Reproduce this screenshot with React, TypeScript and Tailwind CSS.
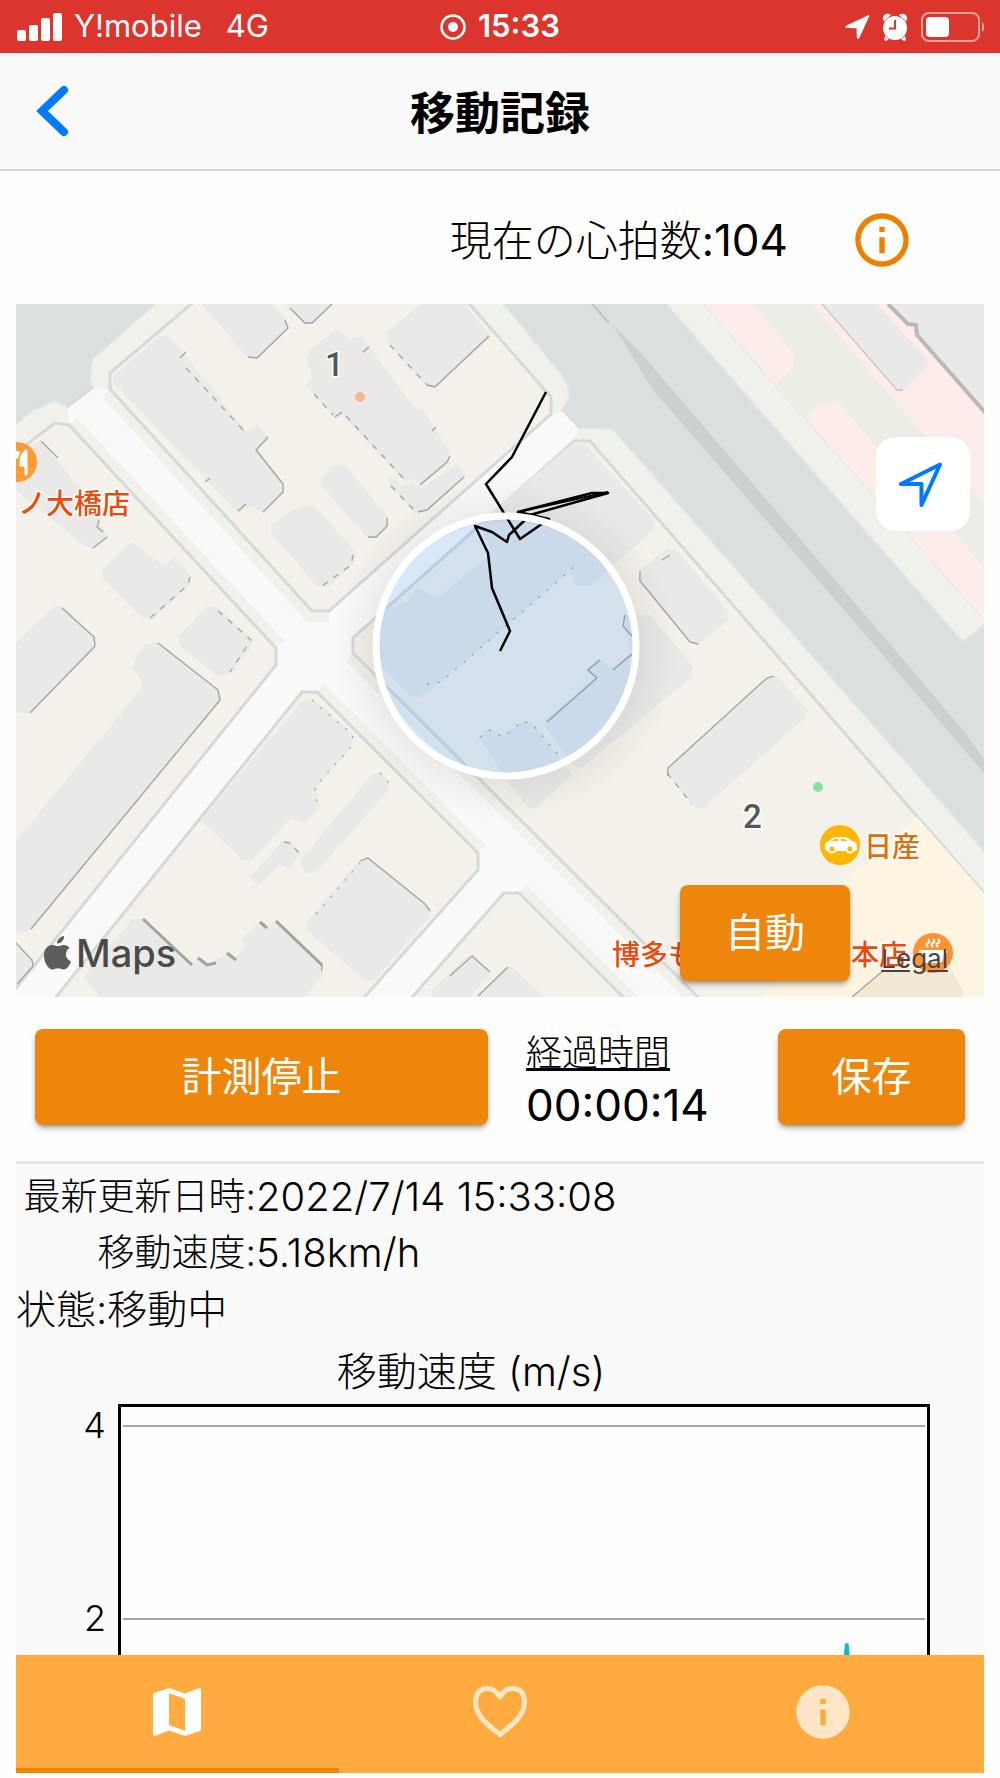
import { useState } from "react";
import { MdInfo, MdInfoOutline, MdMap } from "react-icons/md";

const fontStack = "font-['Inter','Noto_Sans_CJK_JP',sans-serif]";

const blocks = [
  "M196 300L110 373V389L312 611H329L551 414V397L466 300Z",
  "M574 441H590L990 900V1005H706L353 653V638Z",
  "M10 457L55 423L69 425L276 648V665L0 1008V457Z",
  "M302 692H317L478 853V870L360 1002H52Z",
  "M504 893H519L630 1004H406Z",
];

const buildings = [
  "M160 337H167L182 353L247 434L257 426L268 437L256 450L283 483V493L263 512L250 505L238 512L115 383V376Z",
  "M200 300L248 357H257L288 327L285 320L266 300Z",
  "M283 300L305 323H312L336 300Z",
  "M337 331L350 340L360 337L368 347L415 410H422L450 453L448 462L420 485L413 478L405 480L343 415L335 417L308 385L313 378L308 360L310 350Z",
  "M427 300L388 333L390 345L427 385H435L490 337L460 300Z",
  "M334 466H344L388 518L387 527L377 537H368L322 485V479Z",
  "M304 507H314L355 553L353 563L328 586H318L272 532V525L292 512Z",
  "M390 477L403 487L412 483L420 490L457 465L465 475L427 510L415 512L390 485Z",
  "M40 442L100 513L99 524L107 537L93 548L85 545L10 484V460Z",
  "M132 543L165 568L175 558L190 577L188 585L153 618L143 617L103 577V571Z",
  "M55 607H62L95 638V648L28 713L10 710V650Z",
  "M207 607L217 608L251 640L250 648L230 672L218 675L182 647L180 637Z",
  "M147 645L158 643L218 690L220 700L30 928L20 933L10 930V850L143 688L142 680L133 668L138 655Z",
  "M302 703L312 700L353 735L350 748L315 787L318 807L305 821L290 818L250 860L242 858L202 820Z",
  "M373 775L380 773L388 782L387 790L317 870L307 872L302 867V860Z",
  "M283 842H290L299 853L288 868L280 863L258 884L251 877Z",
  "M360 861L368 858L430 910L428 917L373 980L367 981L308 930V922Z",
  "M133 920L143 919L192 965L200 958L210 965L228 953L235 960L247 945L242 940L260 923L267 928L276 922L322 965V975L300 1000H104L85 977Z",
  "M10 939L33 962L10 988Z",
  "M433 990L466 958L473 956L490 973L465 1000H433Z",
  "M477 999L506 968H512L545 999Z",
  "M572 445H584L653 520L652 530L590 585L577 585L570 570L440 682L418 697L408 693L378 660V613L408 603L417 588L437 600L493 553L480 523Z",
  "M667 550L677 552L728 613L727 620L698 644L690 642L640 580V572Z",
  "M623 617L650 616L692 667L690 677L582 766L574 765L547 727L545 722L595 678L588 670L600 660L612 670L632 653Z",
  "M480 737L490 730L503 737L523 721L533 725L571 775L535 807H529L510 783Z",
  "M767 678L775 676L807 710L805 717L703 807H696L667 773L668 768Z",
];

const outlines = [
  "M263 512L283 492V484L256 450L268 437M180 358L186 352M205 482L210 478M238 511L246 504",
  "M248 357L257 358L288 328L285 320M290 308L305 323H312L332 304",
  "M420 485L447 462L450 456M335 417L342 412M363 352L369 347M432 431L436 427",
  "M427 385L435 387L489 336M418 512L427 510L464 477",
  "M368 537H376L387 526V518M93 548L107 537M99 520L97 527L103 532M41 441L58 458",
  "M62 608L94 637L95 646L30 713",
  "M158 643L218 690L220 700L31 929",
  "M360 861L368 858L425 904L430 911",
  "M16 943L32 960L33 966L17 984M450 976L472 956L490 972M478 996L508 967",
  "M670 555L662 560M640 571V581L690 642L698 644",
  "M774 676L767 678L668 768V776M597 678L547 722M600 660L588 670L597 678M613 670L632 654M625 615L623 626L632 636",
  "M852 997L884 970",
];

const dashes = [
  "M186 368L247 434M390 345L427 385M314 394L333 415M346 416L405 480M391 486L416 512",
  "M353 555L351 565L322 586M190 577L188 585L150 618M218 611L251 640L230 672",
  "M284 842L290 843L299 853M667 773L692 804M322 965L321 976",
];

const dots = [
  "M312 700L353 735L350 748L315 787L318 810M380 773L388 782L387 790M316 914L360 863",
  "M427 684L441 682L575 566M480 737L490 730L503 737L523 721L533 725L560 757",
];

const route =
  "M546 392L512 457L486 484L520 539L549 519L518 512L592 493L608 493L530 515L523 522L509 535L507 542L492 532L475 526L488 553L492 588L510 631L500 651";

const tabs = [
  { key: "map", label: "マップ" },
  { key: "heart", label: "心拍数" },
  { key: "info", label: "情報" },
];

function StatusBar() {
  return (
    <div className="grid h-[53px] shrink-0 grid-cols-3 items-center bg-[#dc352e] px-4 text-[31px] text-white">
      <div className="flex items-center">
        <svg viewBox="0 0 46 28" className="h-7 w-[46px]" fill="currentColor">
          <rect x="1" y="17" width="9" height="11" rx="2" />
          <rect x="13" y="12" width="9" height="16" rx="2" />
          <rect x="25" y="5" width="9" height="23" rx="2" />
          <rect x="37" y="0" width="9" height="28" rx="2" />
        </svg>
        <span className="ml-3">Y!mobile</span>
        <span className="ml-6">4G</span>
      </div>
      <div className="flex items-center justify-center gap-3 font-semibold">
        <svg viewBox="0 0 26 26" className="size-[26px]">
          <circle cx="13" cy="13" r="11.500" fill="none" stroke="currentColor" strokeWidth="2.500" />
          <circle cx="13" cy="13" r="5" fill="currentColor" />
        </svg>
        15:33
      </div>
      <div className="flex items-center justify-end gap-3">
        <svg viewBox="0 0 26 26" className="size-[26px]" fill="currentColor">
          <path d="M24.3 1.2c.7-.3 1.2.3.9 1L15.4 23.8c-.6 1.4-2.5 1.2-2.6-.3l-.2-9.3-9.7-.2c-1.700 0-1.900-1.900-.5-2.600z" />
        </svg>
        <svg viewBox="0 0 26 28" className="h-7 w-[26px]" fill="currentColor">
          <circle cx="13" cy="15" r="12" />
          <path d="M1 7C0 2 5-1 9 2L2 8ZM25 7c1-5-4-8-8-5l7 6ZM3 23l4 3-3 2-2-1ZM23 23l-4 3 3 2 2-1Z" />
          <path d="M13 7v8.500H7" fill="none" stroke="#dc352e" strokeWidth="2" />
        </svg>
        <svg viewBox="0 0 64 32" className="h-8 w-16">
          <rect x="2" y="2" width="57" height="28" rx="7" fill="none" stroke="#f0a09c" strokeWidth="2" />
          <rect x="6" y="6" width="23" height="20" rx="4" fill="white" />
          <path d="M62 11c3 2 3 8 0 10Z" fill="#f0a09c" />
        </svg>
      </div>
    </div>
  );
}

function Header() {
  return (
    <header className="grid h-[118px] shrink-0 grid-cols-[100px_1fr_100px] items-center border-b-2 border-[#d5d7d8] bg-[#f9f9f9]">
      <button type="button" aria-label="戻る" className="flex h-full items-center pl-9 text-[#007aff]">
        <svg viewBox="0 0 34 52" className="h-[52px] w-[34px]">
          <path d="M28 5L6 26l22 21" fill="none" stroke="currentColor" strokeWidth="8" strokeLinecap="round" />
        </svg>
      </button>
      <h1 className="pt-1 text-center text-[45px] leading-none font-bold">移動記録</h1>
    </header>
  );
}

function MapDrawing() {
  return (
    <svg
      viewBox="16 304 968 693"
      className="block h-full w-full"
      preserveAspectRatio="xMidYMid slice"
    >
      <defs>
        <radialGradient id="areaShadow">
          <stop offset="0.74" stopColor="#000" stopOpacity="0" />
          <stop offset="0.75" stopColor="#000" stopOpacity="0.06" />
          <stop offset="1" stopColor="#000" stopOpacity="0" />
        </radialGradient>
      </defs>
      <rect x="16" y="304" width="968" height="693" fill="#f9f9f9" />
      {/* river banks */}
      <g fill="#f0f1eb" stroke="#f0f1eb">
        <path d="M10 300H196L110 373V389L93 387L67 407L69 425L55 423L10 457Z" />
        <path d="M466 300L551 397V414L565 410L580 428L574 441H590L990 900V626L703 300Z" />
      </g>
      <g fill="none" stroke="#f0f1eb" strokeWidth="22">
        <path d="M110 389L312 611H329M69 425L276 648M353 653L706 1005M317 692L478 853M519 893L630 1004" />
      </g>
      {/* water */}
      <g fill="#dae0e0" stroke="#e4e8e4" strokeWidth="2">
        <path d="M10 300H160L92 360L90 380L93 387L67 407L55 401L33 410L10 430Z" />
        <path d="M500 300L555 367Q578 390 563 408L580 428L612 429L622 440L990 858V620L963 642L663 300Z" />
      </g>
      <path d="M613 325L640 352L895 650L967 735L990 768V780L870 640L653 390Z" fill="#cbd1d0" />
      <path d="M592 304L609 323" stroke="#bfc5c5" strokeWidth="2" />
      <path d="M93 387L67 407M562 409L580 428" stroke="#dfddd3" strokeWidth="3" />
      {/* east side */}
      <path d="M703 300H990V627L982 618Z" fill="#fcecea" />
      <path
        d="M748 300H809L925 437L990 510V575L952 530L877 447L838 402H822L805 417L777 383L793 368L795 355Z"
        fill="#ecede5"
      />
      <path d="M818 300L897 390H903L928 365V360L873 300Z" fill="#eae9e7" />
      <path d="M822 304L897 390H903" fill="none" stroke="#adacaa" />
      <path d="M884 300L908 324L916 325L917 335L990 418V300Z" fill="#eae9e7" />
      <path d="M888 304L908 324L916 325L917 335L990 418" fill="none" stroke="#bbb9b8" strokeWidth="4" />
      <path d="M963 642L990 619M703 304L982 618" fill="none" stroke="#e4e2d5" />
      <g fill="#f4f1ea" stroke="#d5d9da" strokeWidth="3">
        {blocks.map((d) => (
          <path key={d} d={d} />
        ))}
      </g>
      <path d="M917 817L843 882L850 940L758 997H990V900Z" fill="#fdf4e2" />
      <path d="M852 997L883 970L916 973L950 968L963 990L962 997Z" fill="#f3e8d4" />
      <g fill="#eae9e7" stroke="#eae9e7" strokeWidth="2" strokeLinejoin="round">
        {buildings.map((d) => (
          <path key={d} d={d} />
        ))}
      </g>
      <g fill="none" stroke="#a3a2a1" strokeWidth="1.300">
        {outlines.map((d) => (
          <path key={d} d={d} />
        ))}
        {dashes.map((d) => (
          <path key={d} d={d} strokeDasharray="6 7" />
        ))}
        {dots.map((d) => (
          <path key={d} d={d} strokeDasharray="2 9" />
        ))}
        <path
          d="M143 919L192 965M198 958L207 965L216 963M227 953L236 960M260 922L267 928M276 921L322 965"
          strokeWidth="3"
        />
      </g>
      {/* current area and the walked route */}
      <circle cx="506" cy="649" r="172" fill="url(#areaShadow)" />
      <circle cx="506" cy="646" r="130" fill="#007aff" fillOpacity="0.13" />
      <path d={route} fill="none" stroke="#000" strokeWidth="2.500" strokeLinejoin="round" />
      <path d="M518 512L608 492" stroke="#000" strokeWidth="2" />
      <circle cx="506" cy="646" r="130" fill="none" stroke="#fff" strokeWidth="7" />

      <circle cx="360" cy="397" r="5" fill="#f7b795" />
      <circle cx="818" cy="787" r="5" fill="#86e0a0" />
      <g fontSize="33" fontWeight="500" fill="#53595b" stroke="#fff" strokeWidth="3" paintOrder="stroke" fontFamily="Roboto">
        <text x="325" y="376">1</text>
        <text x="743" y="828">2</text>
      </g>
      <g
        fontSize="28"
        fontWeight="500"
        fill="#ea4a0a"
        stroke="#fff"
        strokeWidth="3"
        strokeLinejoin="round"
        paintOrder="stroke"
      >
        <text x="18" y="514">ノ大橋店</text>
        <text x="612" y="965">博多も</text>
        <text x="851" y="965">本店</text>
        <text x="864" y="857" fill="#d9700c">日産</text>
      </g>
      <g>
        <circle cx="17" cy="462" r="20" fill="#ff9a35" />
        <path d="M26 451v23M26 451q-6 5-5 14h5" fill="#fff" stroke="#fff" strokeWidth="3" strokeLinecap="round" />
        <path d="M16 451v8q3 0 4-8" fill="#fff" />
      </g>
      <g>
        <circle cx="840" cy="845" r="20" fill="#ffb700" />
        <path
          d="M825 845q0-3 4-4q4-4 7-4h8q4 0 8 4q5 1 5 5v3q0 2-3 2h-26q-3 0-3-2Z"
          fill="#fff"
        />
        <path d="M831 841l4-2h3v2ZM841 839h3l4 2h-7Z" fill="#ffb700" />
        <circle cx="832" cy="849" r="3.500" fill="#ffb700" stroke="#fff" strokeWidth="2" />
        <circle cx="850" cy="849" r="3.500" fill="#ffb700" stroke="#fff" strokeWidth="2" />
      </g>
      <g>
        <circle cx="933" cy="953" r="20" fill="#ff9233" />
        <path d="M919 950h28v3h-3q0 8-4 10h-14q-4-2-4-10h-3Z" fill="#fff" />
        <path d="M928 947q-3-3 0-4t0-4M933 947q-3-3 0-4t0-4M938 947q-3-3 0-4t0-4" fill="none" stroke="#fff" strokeWidth="2" />
      </g>
    </svg>
  );
}

function MapPanel() {
  return (
    <section className="relative aspect-[968/693] w-full shrink-0 overflow-hidden">
      <MapDrawing />
      <div className="absolute bottom-5 left-7 flex items-center text-[38px] leading-[48px] font-medium text-[#4a4a4a]">
        <svg viewBox="0 0 28 34" className="h-[34px] w-7" fill="#5c5c5c">
          <path d="M20 0c.4 4-3.500 8-7 7.500C12.600 4 16.500.4 20 0ZM25.500 12c-5.500 3.500-4.500 11 1.500 13.500-1.500 4-4 8-7.500 8-2 0-3-1.200-5.500-1.200s-3.500 1.200-5.500 1.200C4.500 33.500 0 26.500 0 19.500 0 13 4 9 8.500 9c2.300 0 4 1.300 5.500 1.300S17.500 9 20 9c2.200 0 4.200 1 5.500 3Z" />
        </svg>
        <span className="ml-1">Maps</span>
      </div>
      <a href="#legal" className="absolute right-9 bottom-[22px] text-[26px] leading-8 text-[#444] underline">
        Legal
      </a>
      <button
        type="button"
        aria-label="現在地"
        className="absolute top-[133px] right-[14px] flex size-[94px] items-center justify-center rounded-[20px] bg-white text-[#007aff]"
      >
        <svg viewBox="0 0 48 48" className="size-12">
          <path
            d="M41 4.500L2 24H22.500V45Z"
            fill="none"
            stroke="currentColor"
            strokeWidth="4"
            strokeLinejoin="round"
          />
        </svg>
      </button>
      <button
        type="button"
        className="absolute right-[134px] bottom-4 h-24 w-[170px] rounded-lg bg-[#ee860b] text-[40px] leading-none text-white shadow-md shadow-black/30"
      >
        自動
      </button>
    </section>
  );
}

function SpeedChart() {
  return (
    <figure className="flex flex-col">
      <figcaption className="pr-[58px] text-center text-[40px] leading-[65px] font-light">
        移動速度 (m/s)
      </figcaption>
      <div className="flex">
        <div className="flex w-[102px] flex-col pr-3 text-right text-[36px] leading-[42px] font-light">
          <span className="h-[193px]">4</span>
          <span>2</span>
        </div>
        <div className="mr-[54px] h-[440px] flex-1 border-3 border-black bg-[#fdfdfd] px-0.5">
          <div className="h-[18px]" />
          <div className="h-[193px] border-t-2 border-[#a5a5a5]" />
          <div className="h-[193px] border-t-2 border-[#a5a5a5]">
            <svg viewBox="0 0 800 190" className="h-full w-full" preserveAspectRatio="none">
              <path d="M680 170L712 150L722 25L732 150L800 170" fill="none" stroke="#00bcd4" strokeWidth="4" strokeLinejoin="round" />
            </svg>
          </div>
        </div>
      </div>
    </figure>
  );
}

export default function App() {
  const [activeTab, setActiveTab] = useState("map");

  return (
    <div className={`flex h-screen flex-col overflow-hidden bg-[#fefefe] text-black ${fontStack}`}>
      <StatusBar />
      <Header />
      <main className="flex min-h-0 flex-1 flex-col px-4">
        <div className="flex h-[133px] shrink-0 items-center justify-end gap-[62px] pt-1 pr-[70px]">
          <p className="text-[42px] leading-none">
            <span className="font-light">現在の心拍数</span>:
            <span className="text-[44px]">104</span>
          </p>
          <button type="button" aria-label="心拍数の説明" className="text-[#ee7f00]">
            <MdInfoOutline className="size-16" />
          </button>
        </div>
        <MapPanel />
        <div className="flex shrink-0 items-start px-[19px] pt-8 pb-7">
          <button
            type="button"
            className="h-24 flex-1 rounded-lg bg-[#ee860b] text-[40px] leading-none text-white shadow-md shadow-black/30"
          >
            計測停止
          </button>
          <div className="flex w-[290px] flex-col pl-[38px]">
            <span className="text-[36px] leading-[48px] font-light underline underline-offset-2">経過時間</span>
            <span className="text-[44px] leading-[56px]">00:00:14</span>
          </div>
          <button
            type="button"
            className="h-24 w-[187px] rounded-lg bg-[#ee860b] text-[40px] leading-none text-white shadow-md shadow-black/30"
          >
            保存
          </button>
        </div>
        <section className="min-h-0 flex-1 overflow-hidden border-t-3 border-[#e6e6e6] bg-[#fafafa]">
          <dl className="grid grid-cols-[240px_1fr] pt-[5px] leading-[56px] font-light">
            <dt className="text-right text-[37px]">最新更新日時:</dt>
            <dd className="text-[40px]">2022/7/14 15:33:08</dd>
            <dt className="text-right text-[37px]">移動速度:</dt>
            <dd className="text-[40px]">5.18km/h</dd>
          </dl>
          <p className="text-[40px] leading-[58px] font-light">状態:移動中</p>
          <SpeedChart />
        </section>
        <nav className="mb-[5px] grid h-[118px] shrink-0 grid-cols-3 bg-[#ffab40]">
          {tabs.map((tab) => {
            const selected = tab.key === activeTab;
            return (
              <button
                key={tab.key}
                type="button"
                aria-label={tab.label}
                onClick={() => setActiveTab(tab.key)}
                className={
                  selected
                    ? "flex items-center justify-center border-b-5 border-[#f08300] text-white"
                    : "flex items-center justify-center border-b-5 border-transparent text-[#ffe6c6]"
                }
              >
                {tab.key === "map" && <MdMap className="size-16" />}
                {tab.key === "heart" && (
                  <svg viewBox="0 0 64 64" className="size-16">
                    <path
                      d="M32 17C28 10 23 8 18 8.500C11 9 7.500 15 7.500 22C7.500 36 20 45 32 54.500C44 45 56.500 36 56.500 22C56.500 15 53 9 46 8.500C41 8 36 10 32 17Z"
                      fill="none"
                      stroke="currentColor"
                      strokeWidth="5"
                      strokeLinejoin="round"
                    />
                  </svg>
                )}
                {tab.key === "info" && <MdInfo className="size-16" />}
              </button>
            );
          })}
        </nav>
      </main>
    </div>
  );
}
